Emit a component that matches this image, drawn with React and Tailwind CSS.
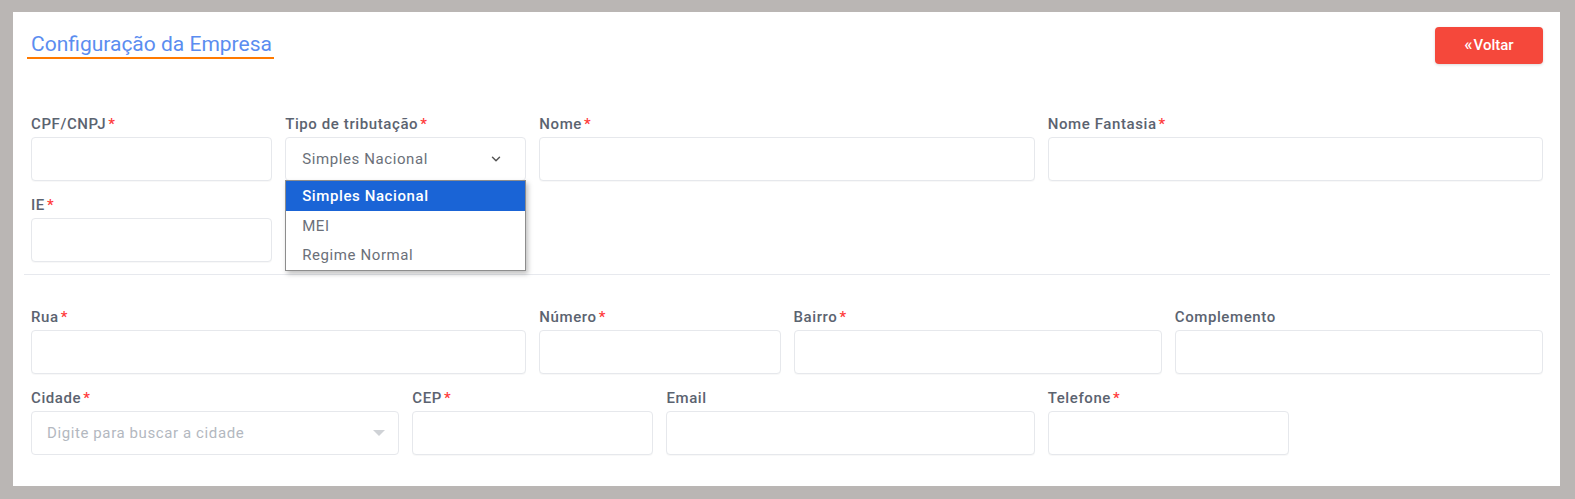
import { ChevronDown } from 'lucide-react';

const Req = () => <span className="ml-[2px] text-[#ff3b3b]">*</span>;

function Field({ label, required, span, children }) {
  return (
    <div className={span}>
      <label className="block text-[15px] tracking-[0.6px] leading-5 font-medium text-[#5b6370] mb-[3px]">
        {label}
        {required && <Req />}
      </label>
      {children || (
        <div className="h-[44px] rounded-[4px] border border-[#e6e8ec] bg-white shadow-[0_1px_1px_rgba(0,0,0,0.03)]" />
      )}
    </div>
  );
}

export default function App() {
  return (
    <div
      className="w-full h-[499px] bg-[#bab6b4] pt-[12px] pl-[13px] pr-[15px] pb-[13px]"
      style={{ fontFamily: 'Roboto, "Noto Sans", sans-serif' }}
    >
      <div className="h-full bg-white pt-[15px] pl-[18px] pr-[17px]">
        <div className="flex justify-between items-start h-[37px]">
          <div className="-ml-1 pl-1 pr-[2px] mt-[4px] border-b-2 border-[#ff7a00]">
            <h1 className="text-[21px] leading-[26px] text-[#5b8df0]">Configuração da Empresa</h1>
          </div>
          <button className="w-[108px] h-[37px] rounded-[4px] bg-[#f5483b] text-white text-[15px] font-medium shadow-[0_1px_3px_rgba(0,0,0,0.15)] flex items-center justify-center">
            <span className="text-[17px] leading-none mr-[1px] -mt-[2px]">«</span>Voltar
          </button>
        </div>

        <div className="grid grid-cols-12 gap-x-[13px] gap-y-[14px] mt-[50px]">
          <Field label="CPF/CNPJ" required span="col-span-2" />
          <Field label="Tipo de tributação" required span="col-span-2">
            <div className="relative">
              <div className="h-[44px] rounded-[4px] border border-[#e6e8ec] bg-white flex items-center justify-between pl-[16px] pr-[22px] text-[15px] tracking-[0.6px] text-[#6b7079]">
                <span>Simples Nacional</span>
                <ChevronDown size={14} strokeWidth={2.5} className="text-[#555]" />
              </div>
              <div className="absolute left-0 right-0 top-[43px] z-10 bg-white border border-[#8d8d8d] shadow-[2px_3px_5px_rgba(0,0,0,0.25)] text-[15px] tracking-[0.6px]">
                <div className="h-[30px] flex items-center pl-[16px] bg-[#1a64d6] text-white font-medium">Simples Nacional</div>
                <div className="h-[30px] flex items-center pl-[16px] text-[#6b7079]">MEI</div>
                <div className="h-[29px] flex items-center pl-[16px] text-[#6b7079]">Regime Normal</div>
              </div>
            </div>
          </Field>
          <Field label="Nome" required span="col-span-4" />
          <Field label="Nome Fantasia" required span="col-span-4" />
          <Field label="IE" required span="col-span-2" />
        </div>

        <div className="h-px bg-[#e7e9ee] mt-[12px] -ml-[7px] mr-[-7px]" />

        <div className="grid grid-cols-12 gap-x-[13px] gap-y-[14px] mt-[32px]">
          <Field label="Rua" required span="col-span-4" />
          <Field label="Número" required span="col-span-2" />
          <Field label="Bairro" required span="col-span-3" />
          <Field label="Complemento" span="col-span-3" />
          <Field label="Cidade" required span="col-span-3">
            <div className="h-[44px] rounded-[4px] border border-[#e6e8ec] bg-white flex items-center justify-between pl-[15px] pr-[13px] text-[15px] tracking-[0.6px] text-[#b3b8bf]">
              <span>Digite para buscar a cidade</span>
              <span className="w-0 h-0 border-l-[6px] border-r-[6px] border-t-[6px] border-l-transparent border-r-transparent border-t-[#cfd2d6]" />
            </div>
          </Field>
          <Field label="CEP" required span="col-span-2" />
          <Field label="Email" span="col-span-3" />
          <Field label="Telefone" required span="col-span-2" />
        </div>
      </div>
    </div>
  );
}
